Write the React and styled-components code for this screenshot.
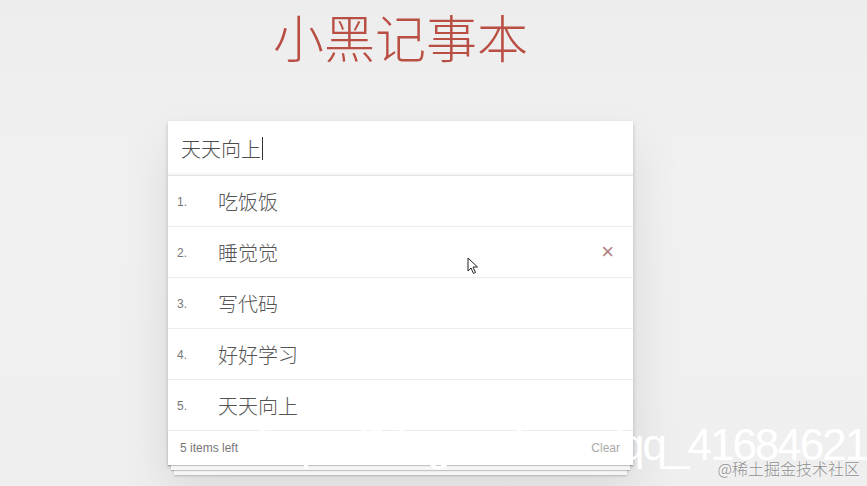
import React from 'react';
import styled, { createGlobalStyle } from 'styled-components';

const GlobalStyle = createGlobalStyle`
  html, body {
    margin: 0;
    padding: 0;
    background: #f0f0f0;
    font-family: "Liberation Sans", "Noto Sans CJK SC", sans-serif;
  }
`;

const Page = styled.div`
  position: relative;
  width: 867px;
  height: 486px;
  overflow: hidden;
  background: linear-gradient(180deg, #ededed 0%, #f1f1f1 40%, #efefef 100%);
`;

const Column = styled.section`
  width: 465px;
  margin-left: 168px;
`;

const Title = styled.h1`
  margin: 0;
  height: 121px;
  text-align: center;
  font-family: "Noto Sans CJK SC", sans-serif;
  font-size: 51px;
  font-weight: 300;
  line-height: 72px;
  color: #b94e43;
`;

const Card = styled.div`
  background: #fff;
  box-shadow: 0 2px 4px rgba(0, 0, 0, 0.2), 0 25px 50px rgba(0, 0, 0, 0.1);
`;

const InputRow = styled.div`
  display: flex;
  align-items: center;
  height: 54px;
  padding: 0 13px;
  border-bottom: 1px solid #e3e3e3;
  box-shadow: inset 0 -2px 1px rgba(0, 0, 0, 0.03);
  font-family: "Noto Sans CJK SC", sans-serif;
  font-size: 20px;
  font-weight: 300;
  color: #4d4d4d;
`;

const Caret = styled.span`
  display: inline-block;
  width: 1px;
  height: 23px;
  margin-left: 1px;
  background: #333;
`;

const List = styled.ul`
  list-style: none;
  margin: 0;
  padding: 0;
`;

const Item = styled.li`
  display: flex;
  align-items: center;
  height: 50px;
  border-bottom: 1px solid #ededed;
  padding-right: 19px;
`;

const Index = styled.span`
  width: 50px;
  padding-left: 9px;
  padding-top: 2px;
  box-sizing: border-box;
  font-size: 12px;
  color: #777;
`;

const Label = styled.span`
  flex: 1;
  font-family: "Noto Sans CJK SC", sans-serif;
  font-size: 20px;
  font-weight: 300;
  color: #555;
`;

const Destroy = styled.span`
  font-size: 22px;
  line-height: 1;
  color: #af7f7f;
  visibility: ${(p) => (p.$show ? 'visible' : 'hidden')};
`;

const Footer = styled.footer`
  position: relative;
  display: flex;
  align-items: center;
  justify-content: space-between;
  height: 34px;
  padding: 0 13px 0 12px;
  font-size: 12px;
  color: #777;
  &::before {
    content: '';
    position: absolute;
    left: 0;
    right: 0;
    bottom: 0;
    height: 34px;
    overflow: hidden;
    box-shadow: 0 1px 1px rgba(0, 0, 0, 0.2), 0 8px 0 -3px #f6f6f6,
      0 9px 1px -3px rgba(0, 0, 0, 0.2), 0 16px 0 -6px #f6f6f6,
      0 17px 2px -6px rgba(0, 0, 0, 0.2);
    z-index: 0;
  }
  span {
    position: relative;
    z-index: 1;
  }
`;

const Clear = styled.span`
  color: #aaa;
`;

const Watermark = styled.div`
  position: absolute;
  left: 258px;
  top: 420px;
  font-family: "Liberation Sans", sans-serif;
  font-size: 44px;
  letter-spacing: -2px;
  color: #fff;
  white-space: nowrap;
  pointer-events: none;
`;

const Stamp = styled.div`
  position: absolute;
  right: 7px;
  bottom: 6px;
  font-family: "Noto Sans CJK SC", serif;
  font-size: 16px;
  font-weight: 300;
  color: #8f8f8f;
  text-shadow: 0 0 2px #fff;
`;

const Cursor = styled.svg`
  position: absolute;
  left: 467px;
  top: 257px;
`;

const todos = ['吃饭饭', '睡觉觉', '写代码', '好好学习', '天天向上'];

export default function App() {
  return (
    <Page>
      <GlobalStyle />
      <Column>
        <Title>小黑记事本</Title>
        <Card>
          <InputRow>
            天天向上
            <Caret />
          </InputRow>
          <List>
            {todos.map((t, i) => (
              <Item key={t}>
                <Index>{i + 1}.</Index>
                <Label>{t}</Label>
                <Destroy $show={i === 1}>×</Destroy>
              </Item>
            ))}
          </List>
          <Footer>
            <span>5 items left</span>
            <Clear>Clear</Clear>
          </Footer>
        </Card>
      </Column>
      <Watermark>https://blog.csdn.net/qq_41684621</Watermark>
      <Stamp>@稀土掘金技术社区</Stamp>
      <Cursor width="12" height="18" viewBox="0 0 12 18">
        <path
          d="M1 1 L1 14 L4 11 L6.5 16.5 L8.5 15.5 L6 10 L10.5 10 Z"
          fill="#fff"
          stroke="#222"
          strokeWidth="1"
          strokeLinejoin="round"
        />
      </Cursor>
    </Page>
  );
}
